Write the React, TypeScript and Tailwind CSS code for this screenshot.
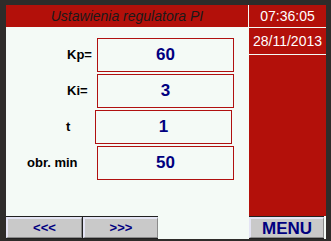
import React from "react";

const rows = [
  { label: "Kp=", value: "60", pl: "pl-[61px]", box: "ml-0" },
  { label: "Ki=", value: "3", pl: "pl-[61px]", box: "ml-0" },
  { label: "t", value: "1", pl: "pl-[60px]", box: "-ml-[2px]" },
  { label: "obr. min", value: "50", pl: "pl-[21px]", box: "ml-0" },
];

function Btn({ children, className = "" }: { children: React.ReactNode; className?: string }) {
  return (
    <div
      className={
        "h-[21px] flex items-center justify-center bg-[#c9c9c9] border-t-2 border-l-2 border-[#e4e4f4] border-b border-r border-b-[#8a8a8a] border-r-[#8a8a8a] text-[#000080] font-bold " +
        className
      }
    >
      {children}
    </div>
  );
}

export default function App() {
  return (
    <div
      className="w-[331px] h-[241px] bg-[#2e2c2a] pt-[5px] pl-[6px] pr-[5px] pb-[2px]"
      style={{ fontFamily: '"Liberation Sans", Arial, sans-serif' }}
    >
      <div className="w-[320px] h-[234px] flex bg-[#f4faf6]">
        {/* left */}
        <div className="w-[242px] flex flex-col">
          <div className="h-[22px] bg-[#b3100a] flex items-center justify-center italic text-[14px] text-[#1a1a1a]">
            Ustawienia regulatora PI
          </div>
          <div className="flex-1 flex flex-col pt-[11px] gap-[2px]">
            {rows.map((r) => (
              <div key={r.label} className="flex items-center h-[34px]">
                <div className={"w-[91px] font-bold text-[13px] text-black whitespace-nowrap " + r.pl}>{r.label}</div>
                <div
                  className={
                    "w-[137px] h-[34px] border border-[#b01010] flex items-center justify-center text-[17px] font-bold text-[#000080] " +
                    r.box
                  }
                >
                  {r.value}
                </div>
              </div>
            ))}
          </div>
          <div className="h-[23px] flex items-end bg-[#f4faf6]">
            <div className="flex w-[152px] bg-[#202020] pt-[1px] gap-[1px] pb-[1px]">
              <Btn className="w-[76px] text-[13px]">&lt;&lt;&lt;</Btn>
              <Btn className="w-[75px] text-[13px]">&gt;&gt;&gt;</Btn>
            </div>
          </div>
        </div>
        <div className="w-[1px] bg-[#f4faf6]" />
        {/* right */}
        <div className="w-[77px] flex flex-col">
          <div className="h-[22px] bg-[#b3100a] flex items-center justify-center text-white text-[14px]">07:36:05</div>
          <div className="h-[1px] bg-[#f4faf6]" />
          <div className="h-[26px] bg-[#b3100a] flex items-center justify-center text-white text-[14px]">28/11/2013</div>
          <div className="h-[1px] bg-[#f4faf6]" />
          <div className="flex-1 bg-[#b3100a]" />
          <div className="h-[23px] flex items-end">
            <div className="w-[75px] bg-[#202020] py-[1px]">
              <Btn className="w-[75px] text-[17px] leading-none">MENU</Btn>
            </div>
          </div>
        </div>
      </div>
    </div>
  );
}
